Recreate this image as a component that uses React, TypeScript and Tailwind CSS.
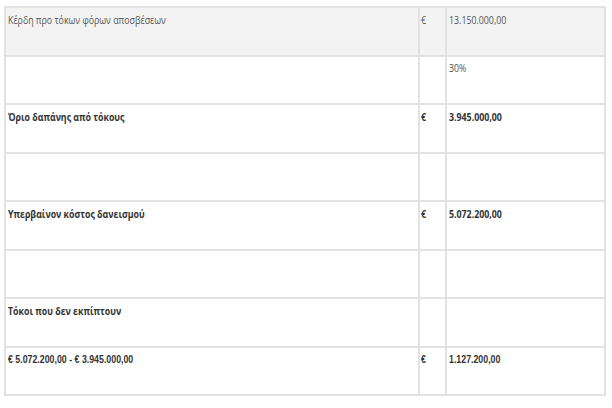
import React from "react";

type Row = {
  label: string;
  cur: string;
  value: string;
  bold: boolean;
  bg?: boolean;
  arial?: boolean;
};

const rows: Row[] = [
  { label: "Κέρδη προ τόκων φόρων αποσβέσεων", cur: "€", value: "13.150.000,00", bold: false, bg: true },
  { label: "", cur: "", value: "30%", bold: false },
  { label: "Όριο δαπάνης από τόκους", cur: "€", value: "3.945.000,00", bold: true },
  { label: "", cur: "", value: "", bold: false },
  { label: "Υπερβαίνον κόστος δανεισμού", cur: "€", value: "5.072.200,00", bold: true },
  { label: "", cur: "", value: "", bold: false },
  { label: "Τόκοι που δεν εκπίπτουν", cur: "", value: "", bold: true },
  { label: "€ 5.072.200,00 - € 3.945.000,00", cur: "€", value: "1.127.200,00", bold: true, arial: true },
];

function T({ text, bold, arial }: { text: string; bold: boolean; arial?: boolean }) {
  if (!text) return null;
  return (
    <span
      className={
        "block w-max origin-left scale-x-[0.8] whitespace-nowrap text-[11px] leading-[16px] " +
        (bold ? "font-bold text-[#333333] " : "font-normal text-[#555555] ") +
        (arial ? "font-['Liberation_Sans',sans-serif]" : "font-['Open_Sans',sans-serif]")
      }
    >
      {text}
    </span>
  );
}

export default function App() {
  return (
    <div className="w-[612px] h-[408px] bg-white pt-[6px] pl-[4px]">
      <div className="w-[602px] border-2 border-b-0 border-[#e2e2e2]">
        {rows.map((r, i) => (
          <div
            key={i}
            className={
              "flex h-[48.5px] border-b-2 border-[#e2e2e2] " + (r.bg ? "bg-[#f3f3f3]" : "bg-white")
            }
          >
            <div className="w-[414px] shrink-0 border-r-2 border-[#e2e2e2] pl-[2px] pt-[3.5px] overflow-hidden">
              <T text={r.label} bold={r.bold} arial={r.arial} />
            </div>
            <div className="w-[27px] shrink-0 border-r-2 border-[#e2e2e2] pl-[1px] pt-[3.5px] overflow-hidden">
              <T text={r.cur} bold={r.bold} arial={r.arial} />
            </div>
            <div className="flex-1 pl-[2px] pt-[3.5px] overflow-hidden">
              <T text={r.value} bold={r.bold} arial={r.arial} />
            </div>
          </div>
        ))}
      </div>
    </div>
  );
}
